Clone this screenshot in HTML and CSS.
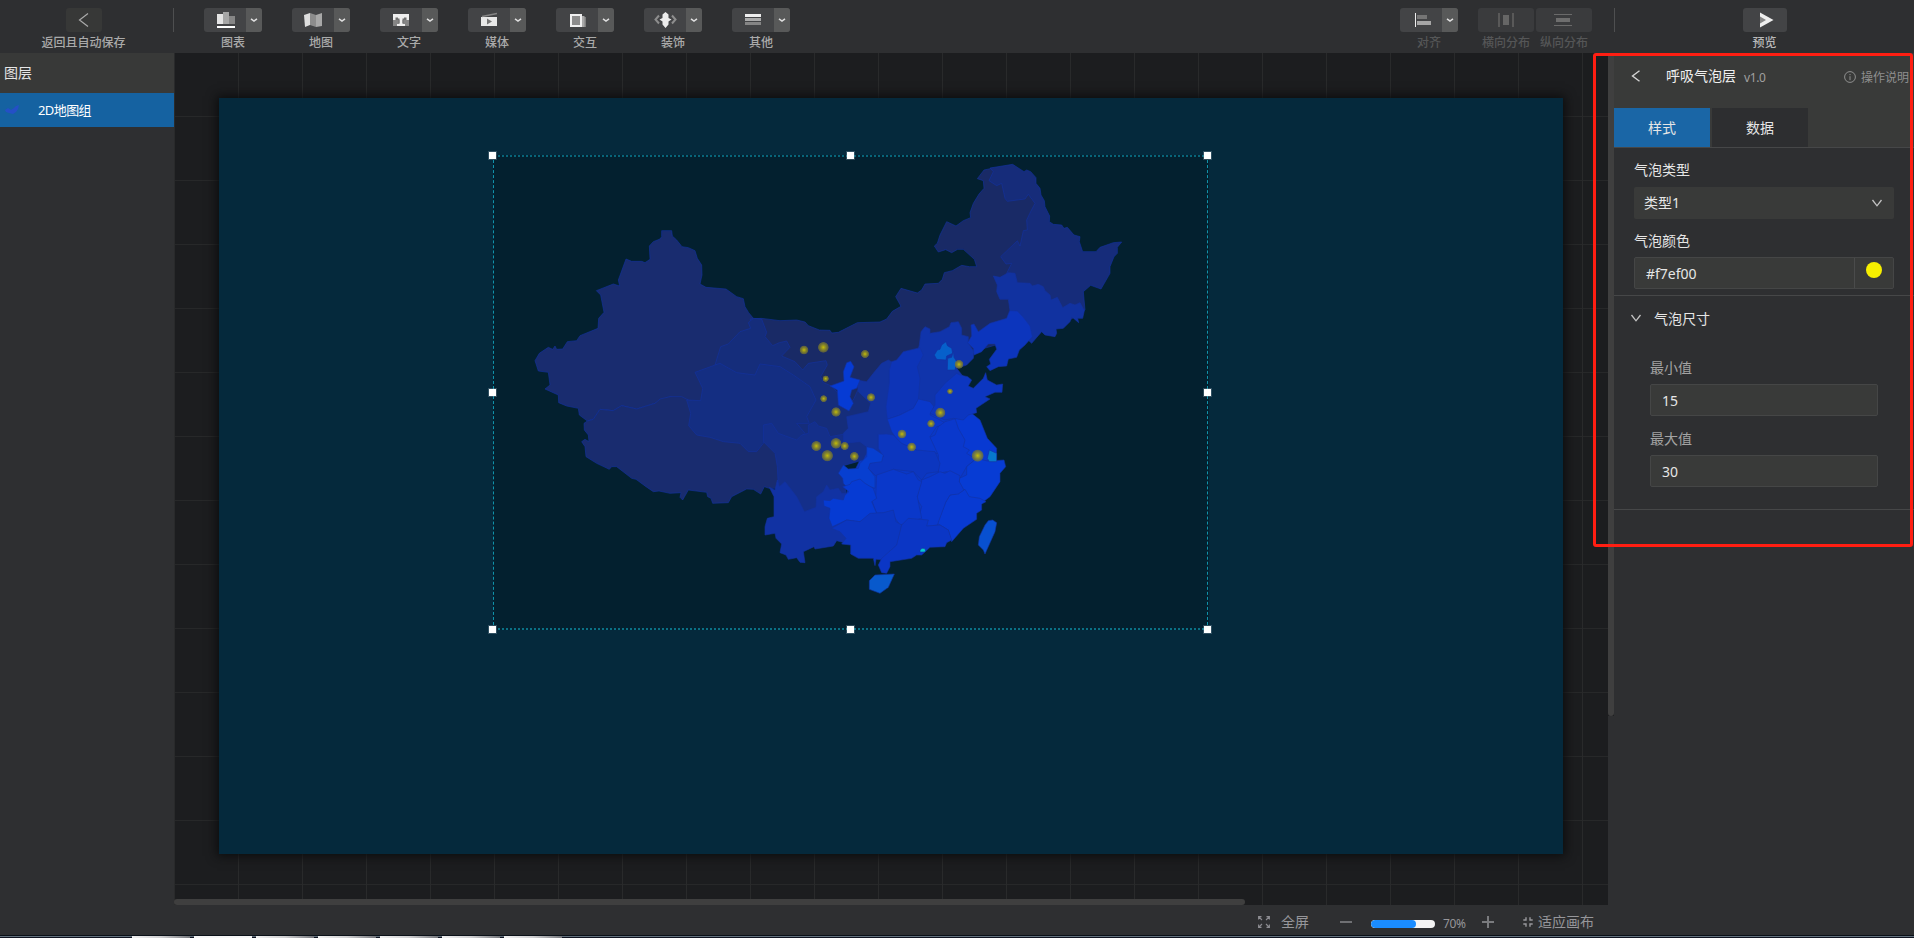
FILE: index.html
```html
<!DOCTYPE html>
<html lang="zh-CN">
<head>
<meta charset="utf-8">
<title>2D地图组</title>
<link rel="stylesheet" href="styles.css">
</head>
<body>
<svg class="defs" width="0" height="0">
  <symbol id="chev" viewBox="0 0 16 24"><path d="M5 10.800 L8 13 L11 10.800" fill="none" stroke="#dedede" stroke-width="1.500"/></symbol>
  <symbol id="down" viewBox="0 0 12 12"><path d="M1.500 3 L6 8.800 L10.500 3" fill="none" stroke="#c4c4c4" stroke-width="1.300"/></symbol>
</svg>
<div class="app">
  <header class="topbar">
    <div class="back">
      <div class="btn back-btn"><svg width="36" height="24"><path d="M22 5.500 L13.500 12 L22 18.500" fill="none" stroke="#a9a9a9" stroke-width="1.200"/></svg></div>
      <span class="cap">返回且自动保存</span>
    </div>
    <i class="vline"></i>
    <nav class="tools">
      <div class="tool"><div class="btn"><svg class="ico" width="42" height="24"><path d="M13 6h6v10h-6z" fill="#e4e4e4"/><path d="M19 4h6v12h-6z" fill="#a6a6a6"/><path d="M25 8h6v8h-6z" fill="#868686"/><path d="M13 18h18v2H13z" fill="#fff"/></svg><svg class="drop"><use href="#chev"/></svg></div><span class="cap">图表</span></div>
      <div class="tool"><div class="btn"><svg class="ico" width="42" height="24"><path d="M12 7l6-2v12l-5 2z" fill="#dedede"/><path d="M18 5l6 2v12l-6-2z" fill="#8c8c8c"/><path d="M24 7l6-2v13l-6 1z" fill="#a8a8a8"/></svg><svg class="drop"><use href="#chev"/></svg></div><span class="cap">地图</span></div>
      <div class="tool"><div class="btn"><svg class="ico" width="42" height="24"><path d="M13 6h16v6H13z" fill="#eee"/><path d="M13 12h16v6H13z" fill="#858585"/><path d="M19.500 9.500h3V16H25v2h-8v-2h2.500z" fill="#eee"/><path d="M15.500 9.500h2.500v1h1.500V15h-1v-3h-3zM26.500 9.500H24v1h-1.500V15h1v-3h3z" fill="#6f6f6f"/></svg><svg class="drop"><use href="#chev"/></svg></div><span class="cap">文字</span></div>
      <div class="tool"><div class="btn"><svg class="ico" width="42" height="24"><path d="M13 9h16v9H13z" fill="#e8e8e8"/><path d="M14 8.500 L29 5.500" stroke="#858585" stroke-width="1.500"/><path d="M19 10.500l5 3-5 3z" fill="#757575"/></svg><svg class="drop"><use href="#chev"/></svg></div><span class="cap">媒体</span></div>
      <div class="tool"><div class="btn"><svg class="ico" width="42" height="24"><path d="M27 9h3v10H18v-1h9z" fill="#7e7e7e"/><path d="M26 8h2.500v11H16v-1h10z" fill="#a8a8a8"/><path d="M15 7h10v11H15z" fill="#8c8c8c" stroke="#f0f0f0" stroke-width="2"/></svg><svg class="drop"><use href="#chev"/></svg></div><span class="cap">交互</span></div>
      <div class="tool"><div class="btn"><svg class="ico" width="42" height="24"><path d="M15 7.500L11.500 11.500l3.500 4M28 7.500l3.500 4-3.500 4" fill="none" stroke="#8d8d8d" stroke-width="2"/><path d="M21.500 4l3 2.500v3.500l3 1.500-3 2v3l-3 3.500-3-3.500v-3l-3-2 3-1.500V6.500z" fill="#ececec"/></svg><svg class="drop"><use href="#chev"/></svg></div><span class="cap">装饰</span></div>
      <div class="tool"><div class="btn"><svg class="ico" width="42" height="24"><path d="M13 6h16v3H13z" fill="#eee"/><path d="M13 10h16v3H13z" fill="#aaa"/><path d="M13 14h16v3H13z" fill="#858585"/></svg><svg class="drop"><use href="#chev"/></svg></div><span class="cap">其他</span></div>
    </nav>
    <div class="tool tool-align dim"><div class="btn"><svg class="ico" width="42" height="24"><path d="M15 5h1v14h-1z" fill="#eee"/><path d="M17 7h10v4H17z" fill="#757575"/><path d="M17 13h14v4H17z" fill="#a6a6a6"/></svg><svg class="drop"><use href="#chev"/></svg></div><span class="cap">对齐</span></div>
    <div class="spread">
      <div class="spread-item dim"><div class="btn faint"><svg width="56" height="24"><path d="M20 5h2v14h-2zM34 5h2v14h-2z" fill="#595959"/><path d="M25 7h6v10h-6z" fill="#666"/></svg></div><span class="cap">横向分布</span></div>
      <div class="spread-item dim"><div class="btn faint"><svg width="56" height="24"><path d="M18 6h18v1H18zM18 17h18v1H18z" fill="#6a6a6a"/><path d="M20 10h14v4H20z" fill="#6e6e6e"/></svg></div><span class="cap">纵向分布</span></div>
    </div>
    <i class="vline vline-r"></i>
    <div class="preview"><div class="btn"><svg width="44" height="24"><path d="M17 4.500 L30.500 12 L17 19.500z" fill="#eee"/><path d="M17 8.500l6 3.500-6 3.500z" fill="#858585"/></svg></div><span class="cap">预览</span></div>
  </header>

  <main class="body">
    <aside class="layers">
      <div class="layers-head">图层</div>
      <div class="layer"><svg width="16" height="12"><path d="M1 6l3-2 3 2 3-2 2-2 3-1-1 4-2 3-3 2-4-1-3-1z" fill="#2450c6"/></svg><span>2D地图组</span></div>
    </aside>

    <section class="stage">
      <div class="grid">
        <div class="artboard">
          <div class="selection">
            <svg class="map" viewBox="39 45 2148 1425" width="716" height="475">
              <defs>
                <radialGradient id="bub"><stop offset="0" stop-color="#c4bd08"/><stop offset=".4" stop-color="#a09b18" stop-opacity=".85"/><stop offset=".85" stop-color="#77752f" stop-opacity=".7"/><stop offset="1" stop-color="#77752f" stop-opacity="0"/></radialGradient>
              </defs>
              <g class="land">
                <path fill="#192c6f" d="M545 272L575 272 577 288 590 300 606 320 625 323 645 332 652 355 665 375 666 405 660 432 678 442 738 447 770 470 790 476 795 500 806 518 820 535 835 570 760 720 668 790 620 785 570 770 525 790 470 807 425 797 400 812 360 808 340 838 322 843 298 825 295 805 260 798 236 788 235 765 195 747 210 735 205 697 175 693 165 662 178 640 205 622 218 628 225 618 230 628 248 627 262 605 290 602 300 587 354 565 356 535 372 517 362 465 349 452 400 432 419 438 415 420 438 357 455 364 485 364 495 368 510 358 508 318 520 305 540 297 545 290Z"/>
                <path fill="#192c6f" d="M322 843L340 838 360 808 400 812 425 797 470 807 525 790 540 777 570 770 605 770 625 780 850 860 895 950 895 1045 868 1045 853 1040 842 1062 820 1048 800 1047 755 1070 745 1088 698 1090 693 1075 683 1070 680 1057 625 1050 608 1080 600 1072 603 1058 570 1060 537 1053 520 1055 498 1040 468 1018 455 1015 410 980 395 980 388 988 350 970 318 950 315 920 305 905 315 898 327 905 325 885 313 870 312 850Z"/>
                <g transform="translate(900 0)">
                  <path fill="#192a66" d="M-90 537L-55 535 0 542 50 540 75 546 85 557 118 570 150 571 155 579 175 577 232 548 300 546 320 537 337 514 363 499 347 470 363 445 412 459 425 450 435 432 475 430 487 418 493 398 517 392 545 376 568 380 590 380 583 358 550 328 533 328 515 338 497 329 475 336 463 318 472 310 480 285 500 245 528 258 550 242 572 233 570 218 580 190 597 162 612 145 610 122 592 116 612 90 640 84 700 120 770 180 800 240 800 450 700 600 560 640 380 760 240 820 80 780 0 700Z"/>
                  <path fill="#162c7a" d="M630 84L698 73 732 95 740 90 752 95 768 113 768 130 780 145 783 165 793 182 795 200 809 228 808 245 820 253 845 255 852 265 862 262 882 285 900 290 898 305 908 335 948 335 960 322 1000 308 1025 306 1012 322 1012 340 1002 350 990 380 990 400 963 447 932 436 910 455 915 510 870 540 700 440 680 400 695 370 678 372 662 350 712 302 720 318 730 272 742 270 740 240 752 215 765 190 745 163 735 177 682 184 675 175 665 130 650 137 627 122 640 95Z"/>
                  <path fill="#1132a0" d="M640 408L660 412 685 398 705 400 712 428 750 430 757 438 775 433 790 440 795 452 810 465 813 480 832 472 848 503 870 490 885 495 900 488 913 512 908 535 893 535 896 548 875 530 870 545 850 565 828 567 830 580 825 590 795 585 785 575 755 610 700 560 690 512 685 478 660 478 650 455 652 435Z"/>
                </g>
              </g>
              <g class="land" transform="translate(660 480)">
                <path fill="#152d7b" d="M160 55L185 57 200 97 195 110 218 137 238 128 260 123 270 142 245 168 285 185 308 210 325 190 378 182 382 195 362 230 370 248 395 258 440 310 460 300 485 245 525 290 512 340 480 440 400 460 300 440 180 260 45 195 62 140 85 132 120 95 152 85 145 68Z"/>
                <path fill="#142e82" d="M-15 217L45 195 60 190 110 218 165 225 180 192 240 200 280 225 330 260 348 300 320 350 328 370 290 370 315 400 300 415 270 440 190 425 190 430 170 455 145 455 120 430 70 425 30 412 -10 405 -34 377 -28 340 -40 300 2 302 8 265Z"/>
                <path fill="#0a38c6" stroke="none" d="M600 330L700 300 790 350 850 430 870 480 850 580 790 660 730 720 560 750 460 700 420 640 460 520 500 440 560 400Z"/>
                <path fill="#142f8a" d="M190 375L215 370 235 400 290 420 305 405 325 400 325 375 345 365 355 378 380 385 390 410 445 400 510 440 490 480 430 497 440 590 350 640 310 640 235 560 232 500 225 460 190 425Z"/>
                <path fill="#1132a3" d="M232 540L238 560 255 545 290 590 313 635 348 622 350 590 370 575 380 555 390 570 415 565 425 580 440 580 470 640 440 730 410 722 400 738 345 747 342 740 310 755 315 788 300 787 290 773 265 778 258 765 240 758 245 732 228 715 225 700 195 705 195 680 202 655 222 650 222 590 208 562 225 570Z"/>
                <path fill="#12339f" d="M470 240L500 245 520 220 545 190 565 180 600 200 590 370 580 410 540 410 550 470 500 440 480 425 430 430 430 400 445 385 440 350 505 335 512 310 475 275Z"/>
                <path fill="#1034ab" d="M658 135L663 95 675 80 690 87 690 100 720 95 748 80 753 68 775 65 785 85 785 105 805 110 805 130 822 155 820 175 800 195 770 205 790 230 720 330 690 320 655 307 640 200Z"/>
                <path fill="#0c35bd" d="M929 32L952 33 970 52 990 78 997 110 975 135 958 150 950 172 925 177 920 198 895 200 870 212 860 200 872 192 868 178 890 148 885 132 865 132 845 155 822 165 820 145 803 128 815 108 813 75 822 72 835 95 870 70 920 55Z"/>
                <path fill="#0d34b7" d="M568 210L575 185 590 180 610 155 660 143 670 165 652 200 660 235 655 300 640 325 600 345 562 358 558 320 568 250Z"/>
                <path fill="#063bd4" d="M430 215L440 188 452 184 462 200 450 232 480 240 470 265 455 270 450 290 460 310 447 333 415 315 412 270 390 258 432 243Z"/>
                <path fill="#0a38ca" d="M562 358L600 345 640 325 655 297 690 305 702 320 690 345 720 360 740 372 710 380 690 410 720 460 650 460 600 430 575 395Z"/>
                <path fill="#0a38cc" d="M715 380L735 365 770 355 800 400 830 475 800 500 780 535 740 515 715 520 715 465 690 412 705 405Z"/>
                <path fill="#0839d2" d="M765 355L815 340 840 360 862 415 890 445 888 482 840 485 800 460 808 450 790 440 795 420 775 385Z"/>
                <path fill="#0c36c0" d="M705 285L735 250 770 220 780 225 803 230 815 240 805 258 820 265 850 235 857 218 862 240 890 255 908 252 906 277 885 277 855 290 870 297 828 325 830 338 805 345 790 360 760 355 735 360 690 340 705 315Z"/>
                <path fill="#0c36bf" d="M535 403L560 402 580 405 605 430 650 450 705 455 720 490 715 515 680 520 665 540 640 515 580 508 530 530 500 500 510 490 550 470 535 445Z"/>
                <path fill="#073cd4" d="M778 535L800 525 800 500 830 475 862 483 912 480 917 500 900 520 900 545 870 590 850 605 800 590 778 555Z"/>
                <path fill="#083ad2" d="M735 610L750 585 775 580 795 568 808 590 840 595 858 605 845 612 845 630 830 640 830 658 790 685 755 725 745 690 712 670Z"/>
                <path fill="#0a38cc" d="M665 540L690 530 720 515 735 520 750 512 780 527 778 545 792 570 775 582 750 585 738 605 725 640 712 675 680 680 655 655 665 620 650 595 655 575Z"/>
                <path fill="#0a38ca" d="M530 525L580 508 620 522 640 515 655 540 665 545 652 590 665 655 600 675 575 640 530 640 515 600 527 595Z"/>
                <path fill="#073fd0" d="M500 440L520 445 550 465 545 485 510 490 505 505 525 530 525 565 480 550 440 560 430 550 428 535 415 520 430 495 445 507 475 505 480 490 500 470Z"/>
                <path fill="#063bd3" d="M370 600L390 602 400 595 430 600 435 585 447 575 428 560 450 553 455 545 480 537 495 550 520 565 530 595 515 605 530 640 480 665 440 660 397 680 387 655 390 625 372 618Z"/>
                <path fill="#0b36c0" d="M395 685L440 660 480 665 510 640 550 638 580 630 588 665 605 675 595 730 550 780 528 778 525 797 520 775 475 775 452 762 452 735 425 732 438 715 420 695Z"/>
                <path fill="#0b36c5" d="M605 675L625 655 685 660 680 678 720 675 745 690 755 720 740 728 735 740 690 742 665 765 650 765 635 775 570 785 570 800 560 820 545 818 535 795 545 775 590 735Z"/>
                <path fill="#0859cc" d="M508 842L525 825 583 822 565 862 540 880 508 868Z"/>
                <path fill="#0850d0" d="M865 662L878 660 890 668 885 695 855 762 850 750 835 735 838 710 855 675Z"/>
                <path fill="#0660cb" d="M703 165L712 150 720 148 725 135 738 125 742 137 755 145 758 160 740 168 738 180 710 178ZM743 175L755 172 760 155 762 172 770 185 765 210 742 210Z"/>
                <path fill="#0678cb" d="M868 450L890 460 890 485 868 485 862 475Z"/>
                <path fill="#08c6ce" stroke="none" d="M660 750L666 745 672 745 677 750 675 756 660 756Z"/>
              </g>
              <g fill="url(#bub)" transform="translate(660 480)">
                <circle cx="312" cy="150" r="14"/><circle cx="370" cy="142" r="17"/><circle cx="495" cy="162" r="13"/><circle cx="377" cy="236" r="10"/><circle cx="371" cy="296" r="11"/><circle cx="408" cy="336" r="15"/><circle cx="513" cy="292" r="13"/><circle cx="777" cy="193" r="14"/><circle cx="750" cy="274" r="9"/><circle cx="721" cy="338" r="16"/><circle cx="693" cy="371" r="12"/><circle cx="606" cy="402" r="14"/><circle cx="635" cy="441" r="14"/><circle cx="349" cy="438" r="16"/><circle cx="408" cy="430" r="17"/><circle cx="434" cy="438" r="13"/><circle cx="382" cy="467" r="18"/><circle cx="463" cy="469" r="14"/><circle cx="833" cy="467" r="19"/>
              </g>
            </svg>
            <i class="h tl"></i><i class="h tc"></i><i class="h tr"></i><i class="h ml"></i><i class="h mr"></i><i class="h bl"></i><i class="h bc"></i><i class="h br"></i>
          </div>
        </div>
        <i class="scroll-x"></i><i class="scroll-y"></i>
      </div>
      <footer class="zoombar">
        <svg width="12" height="12" class="full" fill="none" stroke="#8c8c91" stroke-width="1.100"><path d="M.6 3.500V.6H3.500M8.500 .6h2.900v2.900M.6 8.500v2.900H3.500M11.400 8.500v2.900H8.500M1 1l3 3M11 1L8 4M1 11l3-3M11 11L8 8"/></svg>
        <span class="fs">全屏</span>
        <i class="minus"></i>
        <div class="track"><i class="fill" style="width:70%"></i></div>
        <span class="pct">70%</span>
        <i class="plus"></i>
        <svg width="10" height="10" class="fit" fill="none" stroke="#98989c" stroke-width="1.400"><path d="M3 .3V3H.3M7 .3V3H9.700M3 9.700V7H.3M7 9.700V7H9.700"/></svg>
        <span class="fs">适应画布</span>
      </footer>
    </section>

    <aside class="panel">
      <div class="panel-top">
        <div class="panel-title">
          <svg width="10" height="12"><path d="M8.500 .7L1.500 6l7 5.300" fill="none" stroke="#d4d4d4" stroke-width="1.400"/></svg>
          <span class="name">呼吸气泡层</span><span class="ver">v1.0</span>
          <span class="help"><svg width="12" height="12" fill="none" stroke="#8f8f8f"><circle cx="6" cy="6" r="5.400"/><path d="M6 5.200v4M6 3v1.200"/></svg>操作说明</span>
        </div>
        <div class="tabs"><span class="tab on">样式</span><span class="tab">数据</span></div>
      </div>
      <div class="sec">
        <label class="lab">气泡类型</label>
        <div class="field select"><span>类型1</span><svg width="12" height="12"><use href="#down"/></svg></div>
        <label class="lab lab2">气泡颜色</label>
        <div class="field color"><span class="hex">#f7ef00</span><span class="well"><i class="dot"></i></span></div>
      </div>
      <div class="sec size">
        <div class="size-head"><svg width="12" height="12"><use href="#down"/></svg><span>气泡尺寸</span></div>
        <label class="sub">最小值</label>
        <div class="field num">15</div>
        <label class="sub sub2">最大值</label>
        <div class="field num">30</div>
      </div>
    </aside>
  </main>

  <div class="taskbar"><i class="task"></i><i class="task"></i><i class="task"></i><i class="task"></i><i class="task"></i><i class="task"></i><i class="task"></i></div>
  <div class="marker"></div>
</div>
</body>
</html>
```

FILE: styles.css
```css
* { box-sizing: border-box; }
body { margin: 0; background: #2e2f31; overflow: hidden; font-family: "Noto Sans", "Noto Sans CJK SC", sans-serif; font-size: 14px; color: #e6e6e6; }
i { font-style: normal; display: block; }
svg { display: block; flex: none; }
.defs { position: absolute; }
.app { position: relative; width: 1914px; height: 938px; display: flex; flex-direction: column; }

.topbar { height: 53px; flex: none; display: flex; align-items: flex-start; padding-top: 8px; background: #2e2f31; }
.btn { display: flex; height: 24px; background: #434446; border-radius: 3px; overflow: hidden; }
.cap { font-size: 12px; line-height: 16px; margin-top: 3px; color: #aaa; white-space: nowrap; font-weight: 500; }
.back { width: 167px; flex: none; display: flex; flex-direction: column; align-items: center; }
.back-btn { background: #373837; width: 36px; }
.vline { width: 1px; height: 24px; background: #4e4f50; margin-left: 6px; flex: none; }
.tools { display: flex; gap: 30px; margin-left: 30px; }
.tool { width: 58px; flex: none; display: flex; flex-direction: column; align-items: center; }
.drop { width: 16px; height: 24px; background: #585959; }
.tool-align { margin-left: 610px; width: 58px; }
.spread { display: flex; gap: 2px; margin-left: 20px; }
.spread-item, .preview { display: flex; flex-direction: column; align-items: center; }
.spread-item { width: 56px; }
.faint { background: #3a3b3d; }
.dim .cap { color: #555657; }
.vline-r { margin-left: 22px; }
.preview { margin-left: 128px; width: 44px; }
.preview .cap { color: #b8b8b8; margin-right: 1px; }

.body { flex: none; height: 882px; display: flex; }
.layers { width: 174px; flex: none; }
.layers-head { height: 40px; padding-left: 4px; line-height: 39px; background: #383938; font-size: 14px; }
.layer { height: 34px; background: #1562a1; display: flex; align-items: center; padding: 0 0 2px 4px; font-size: 13px; color: #fff; }
.layer svg { margin-top: 2px; }
.layer span { margin-left: 18px; letter-spacing: -.6px; }

.stage { width: 1440px; flex: none; display: flex; flex-direction: column; }
.grid { position: relative; flex: none; height: 852px; padding: 45px 0 0 45px; overflow: hidden; background-color: #1c1d1f; background-image: linear-gradient(90deg, #292a2b 1px, transparent 1px), linear-gradient(#272829 1px, transparent 1px); background-size: 64px 64px; background-position: 0 -1px; }
.artboard { position: relative; width: 1344px; height: 756px; background: #05293c; box-shadow: 0 0 10px 2px #0b0c0d; }
.selection { position: absolute; left: 274px; top: 57px; width: 716px; height: 475px; background: #03202f; }
.selection::after { content: ""; position: absolute; inset: 0 1px 0 0; border: 1px dashed #1093ab; border-top: 2px dotted #08657a; border-bottom: 2px dotted #0a7085; }
.map { position: absolute; left: 0; top: 0; }
.land path { stroke: #1232a2; stroke-opacity: .6; stroke-width: 3; stroke-linejoin: round; }
.h { position: absolute; z-index: 2; width: 7px; height: 7px; background: #fff; outline: 1px solid rgba(180, 200, 210, .25); }
.tl, .ml, .bl { left: -4px; }
.tc, .bc { left: 354px; }
.tr, .mr, .br { left: 711px; }
.tl, .tc, .tr { top: -3px; }
.ml, .mr { top: 234px; }
.bl, .bc, .br { top: 471px; }
.scroll-x { position: absolute; left: 0; bottom: 0; width: 1071px; height: 6px; border-radius: 3px; background: #3f3f3f; }
.scroll-y { position: absolute; right: 0; top: 0; width: 6px; height: 663px; border-radius: 0 0 3px 3px; background: #3f3f3f; }
.scroll-y::after { content: ""; position: absolute; left: 0; top: 663px; width: 6px; height: 189px; background: #2e2f31; }

.zoombar { height: 30px; flex: none; display: flex; align-items: center; padding: 3px 0 0 1084px; color: #96969a; }
.fs { font-size: 14px; line-height: 20px; white-space: nowrap; }
.full + .fs { margin-left: 11px; width: 28px; }
.minus { width: 12px; height: 2px; background: #6f7073; margin-left: 31px; }
.track { width: 64px; height: 8px; border-radius: 4px; background: #f4f4f4; margin: 4px 0 0 19px; overflow: hidden; }
.fill { height: 8px; border-radius: 4px; background: #1a8cff; }
.pct { font-size: 12px; line-height: 16px; width: 31px; margin: 4px 0 0 8px; letter-spacing: -.4px; }
.plus { width: 12px; height: 12px; margin-left: 8px; background: linear-gradient(#7a7b7e, #7a7b7e) center / 12px 2px no-repeat, linear-gradient(#7a7b7e, #7a7b7e) center / 2px 12px no-repeat; }
.fit { margin: 0 5px 0 29px; }

.panel { width: 300px; flex: none; background: #2e2f31; }
.panel-top { height: 95px; background: #393a39; border-bottom: 1px solid #464748; }
.panel-title { height: 55px; display: flex; align-items: center; padding: 0 5px 9px 17px; }
.name { margin-left: 25px; line-height: 20px; color: #f0f0f0; }
.ver { font-size: 12px; margin: 3px 0 0 8px; color: #a0a0a0; letter-spacing: -.4px; }
.help { margin: 2px 0 0 auto; display: flex; align-items: center; gap: 5px; font-size: 12px; color: #8f8f8f; }
.tabs { display: flex; gap: 2px; }
.tab { width: 96px; height: 39px; line-height: 39px; text-align: center; background: #2d2e30; }
.tab.on { background: #1a66a6; }
.sec { border-bottom: 1px solid #464748; height: 148px; padding: 12px 20px 0; }
.lab { display: block; height: 20px; line-height: 20px; }
.field { height: 32px; background: #393a39; border-radius: 2px; display: flex; align-items: center; }
.select { margin-top: 7px; justify-content: space-between; padding: 0 11px 3px 10px; }
.select svg { margin-top: 2px; }
.lab2 { margin-top: 12px; }
.color { margin-top: 6px; border: 1px solid #454646; }
.hex { flex: 1; padding: 0 0 0 11px; }
.well { width: 39px; height: 30px; border-left: 1px solid #4a4b4b; padding: 4px 0 0 11px; }
.dot { width: 16px; height: 16px; border-radius: 50%; background: #f7ef00; }
.size { height: 214px; padding: 12px 36px 0; }
.size-head { display: flex; align-items: center; gap: 12px; height: 20px; margin-left: -20px; }
.sub { display: block; height: 20px; line-height: 20px; margin-top: 30px; color: #a3a3a3; }
.sub2 { margin-top: 13px; }
.num { margin-top: 6px; width: 228px; border: 1px solid #454646; padding: 0 0 0 11px; }

.taskbar { height: 3px; flex: none; display: flex; gap: 4px; padding: 1px 0 0 132px; background: linear-gradient(#0b1118 1px, #65737f 1px, #65737f 2px, #111522 2px); }
.task { width: 58px; height: 2px; background: linear-gradient(90deg, #f1f1f1, #d0d0d2 50%, #77797e); }
.task:nth-child(2) { background: #f6f6f6; }
.marker { position: absolute; left: 1593px; top: 53px; width: 320px; height: 494px; border: 3px solid #ff1e12; border-radius: 3px; }
```
